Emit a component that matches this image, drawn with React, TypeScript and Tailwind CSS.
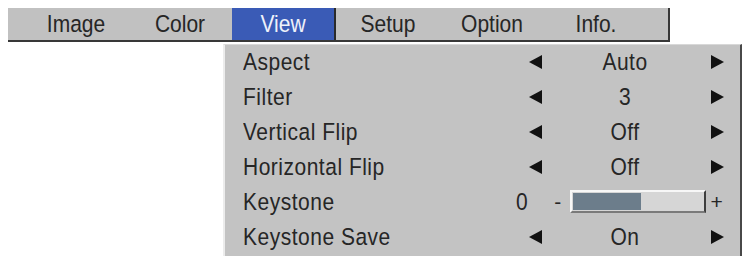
import React from "react";

const LeftArrow = () => (
  <svg width="13" height="14" viewBox="0 0 13 14" className="block">
    <polygon points="0,7 13,0 13,14" fill="#111" />
  </svg>
);
const RightArrow = () => (
  <svg width="13" height="14" viewBox="0 0 13 14" className="block">
    <polygon points="13,7 0,0 0,14" fill="#111" />
  </svg>
);

const menus = ["Image", "Color", "View", "Setup", "Option", "Info."];

const rows: { label: string; value?: string; slider?: boolean }[] = [
  { label: "Aspect", value: "Auto" },
  { label: "Filter", value: "3" },
  { label: "Vertical Flip", value: "Off" },
  { label: "Horizontal Flip", value: "Off" },
  { label: "Keystone", slider: true },
  { label: "Keystone Save", value: "On" },
];

export default function App() {
  return (
    <div className="w-[748px] h-[256px] bg-white overflow-hidden font-['Liberation_Sans',Arial,sans-serif] text-[#262626]">
      <div className="pt-[8px] pl-[8px]">
        <div className="w-[662px] h-[34px] flex bg-[#c1c1c1] border-b-2 border-r-2 border-[#383838] pl-[16px]">
          {menus.map((m) =>
            m === "View" ? (
              <div
                key={m}
                className="w-[104px] h-full flex items-center justify-center text-[21px] bg-[#3a5bb6] text-[#eef1fa] border-r-2 border-[#2a2a2a]"
              >
                <span className="inline-block scale-y-[1.12]">{m}</span>
              </div>
            ) : (
              <div
                key={m}
                className="w-[104px] h-full flex items-center justify-center text-[21px]"
              >
                <span className="inline-block scale-y-[1.12]">{m}</span>
              </div>
            )
          )}
        </div>
      </div>
      <div className="ml-[223px] mt-[2px] w-[519px] h-[214px] bg-[#c3c3c3] border-l-2 border-l-[#ececec] border-t border-t-[#d8d8d8] border-r-2 border-r-[#484848] border-b-2 border-b-[#5a5a5a]">
        {rows.map((r) => (
          <div key={r.label} className="h-[35px] pb-[2px] flex items-center text-[21px] tracking-[0.5px]">
            {r.slider ? (
              <>
                <div className="w-[285px] pl-[18px]">
                  <span className="inline-block scale-y-[1.12]">{r.label}</span>
                </div>
                <div className="w-[24px] text-center">
                  <span className="inline-block scale-y-[1.12]">0</span>
                </div>
                <div className="w-[36px] pl-[12px] text-center">-</div>
                <div className="w-[136px] h-[23px] flex bg-[#d6d6d6] border-t-2 border-l-2 border-t-[#f7f7f7] border-l-[#f7f7f7] border-r-2 border-b-2 border-r-[#3e3e3e] border-b-[#7a7a7a] p-[1px]">
                  <div className="w-[68px] h-full bg-[#6c7d8b]" />
                </div>
                <div className="w-[22px] text-center">+</div>
              </>
            ) : (
              <>
                <div className="w-[295px] pl-[18px]">
                  <span className="inline-block scale-y-[1.12] origin-center">{r.label}</span>
                </div>
                <div className="w-[30px] flex justify-center">
                  <LeftArrow />
                </div>
                <div className="w-[150px] text-center">
                  <span className="inline-block scale-y-[1.12]">{r.value}</span>
                </div>
                <div className="w-[34px] flex justify-center">
                  <RightArrow />
                </div>
              </>
            )}
          </div>
        ))}
      </div>
    </div>
  );
}
